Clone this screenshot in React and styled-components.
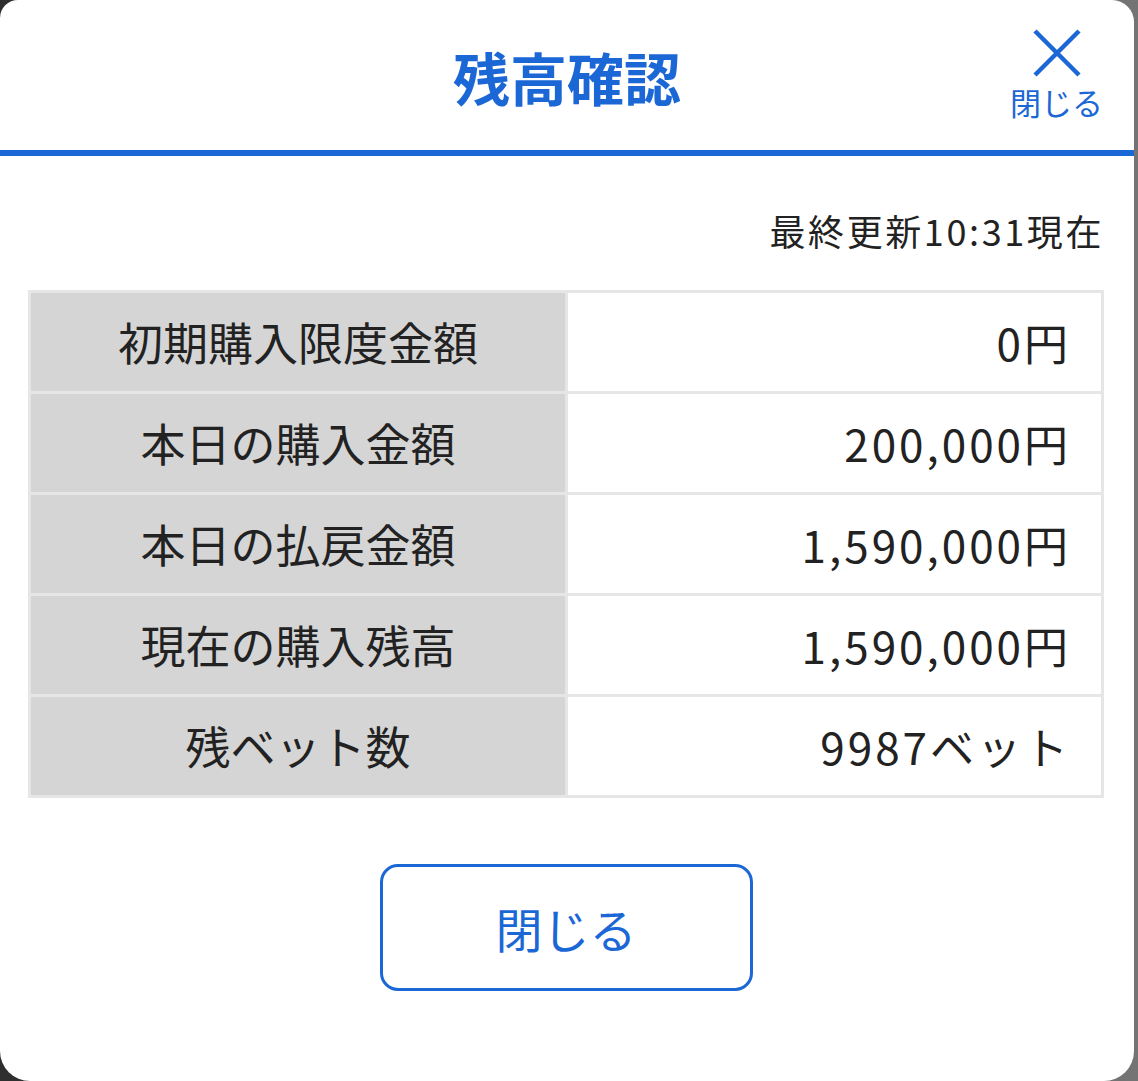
import React from "react";
import styled, { createGlobalStyle } from "styled-components";

const GlobalStyle = createGlobalStyle`
  html, body {
    margin: 0;
    padding: 0;
  }
  body {
    width: 1138px;
    height: 1081px;
    overflow: hidden;
    background: linear-gradient(to right, #2e2e2e, #747474);
    font-family: "Noto Sans CJK JP", "Noto Sans", sans-serif;
  }
`;

const Modal = styled.div`
  width: 1134px;
  height: 1081px;
  background: #ffffff;
  border-radius: 18px 22px 30px 30px;
  display: flex;
  flex-direction: column;
  box-sizing: border-box;
`;

const Header = styled.div`
  height: 150px;
  display: grid;
  grid-template-columns: 1fr auto 1fr;
  align-items: center;
  border-bottom: 6px solid #1c67d6;
`;

const Title = styled.h1`
  grid-column: 2;
  margin: 0;
  font-size: 57px;
  font-weight: 700;
  color: #1c67d6;
  line-height: 1;
  padding-top: 2px;
`;

const CloseIcon = styled.button`
  grid-column: 3;
  justify-self: end;
  align-self: start;
  margin: 28px 31px 0 0;
  padding: 0;
  border: none;
  background: none;
  display: flex;
  flex-direction: column;
  align-items: center;
  gap: 8px;
  color: #1c67d6;
  font-family: inherit;
  font-size: 31px;
  line-height: 1;
  cursor: pointer;
`;

const Body = styled.div`
  padding: 0 30px 0 28px;
  display: flex;
  flex-direction: column;
`;

const Updated = styled.p`
  margin: 55px 0 39px 0;
  text-align: right;
  font-size: 36px;
  letter-spacing: 2.6px;
  color: #222;
  line-height: 1.1;
`;

const Table = styled.table`
  width: 1076px;
  border-collapse: collapse;
  table-layout: fixed;
  border: 3px solid #e6e6e6;
`;

const Row = styled.tr`
  height: 101px;
`;

const Label = styled.td`
  width: 534px;
  border: 3px solid #e6e6e6;
  padding: 0;
  font-size: 45px;
  color: #222;
  text-align: center;
  background: #d5d5d5;
`;

const Value = styled.td`
  border: 3px solid #e6e6e6;
  padding: 0 30px 0 0;
  font-size: 44px;
  letter-spacing: 3px;
  color: #222;
  text-align: right;
  background: #ffffff;
`;

const Footer = styled.div`
  display: flex;
  justify-content: center;
  margin-top: 66px;
`;

const CloseButton = styled.button`
  width: 373px;
  height: 127px;
  border: 3px solid #1c67d6;
  border-radius: 18px;
  background: #fff;
  color: #1c67d6;
  font-family: inherit;
  font-size: 47px;
  cursor: pointer;
`;

const rows = [
  ["初期購入限度金額", "0円"],
  ["本日の購入金額", "200,000円"],
  ["本日の払戻金額", "1,590,000円"],
  ["現在の購入残高", "1,590,000円"],
  ["残ベット数", "9987ベット"],
];

export default function App() {
  return (
    <>
      <GlobalStyle />
      <Modal>
        <Header>
          <Title>残高確認</Title>
          <CloseIcon>
            <svg width="50" height="50" viewBox="0 0 50 50">
              <path d="M3 3 L47 47 M47 3 L3 47" stroke="#1c67d6" strokeWidth="4.5" fill="none" />
            </svg>
            閉じる
          </CloseIcon>
        </Header>
        <Body>
          <Updated>最終更新10:31現在</Updated>
          <Table>
            <tbody>
              {rows.map(([label, value]) => (
                <Row key={label}>
                  <Label>{label}</Label>
                  <Value>{value}</Value>
                </Row>
              ))}
            </tbody>
          </Table>
          <Footer>
            <CloseButton>閉じる</CloseButton>
          </Footer>
        </Body>
      </Modal>
    </>
  );
}
